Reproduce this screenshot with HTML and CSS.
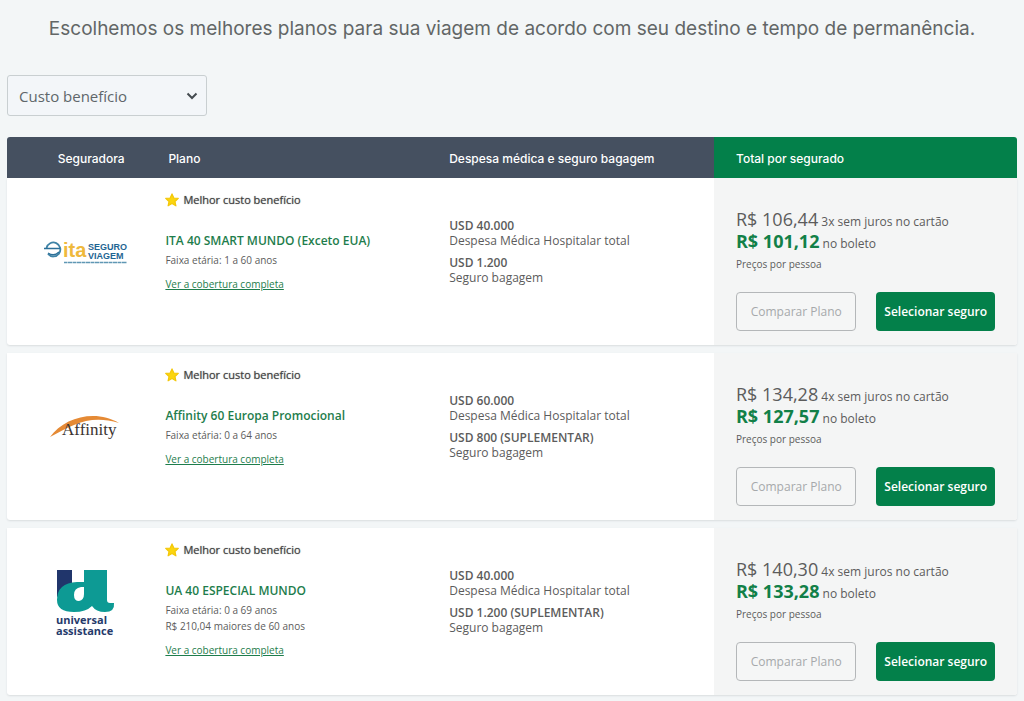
FILE: index.html
```html
<!DOCTYPE html>
<html lang="pt-BR">
<head>
<meta charset="utf-8">
<meta name="viewport" content="width=device-width, initial-scale=1">
<title>Seguro viagem - Planos</title>
<link rel="stylesheet" href="styles.css">
</head>
<body>
	<h1 class="titulo">Escolhemos os melhores planos para sua viagem de acordo com seu destino e tempo de permanência.</h1>

	<div class="filtro">
		<select class="ordem" aria-label="Ordenar por">
			<option>Custo benefício</option>
			<option>Menor preço</option>
			<option>Maior cobertura</option>
		</select>
		<svg class="seta" viewBox="0 0 12 8"><path d="M1.5 1.5 6 6l4.500-4.500"/></svg>
	</div>

	<!-- estrela usada em todos os planos -->
	<svg class="defs">
		<symbol id="estrela" viewBox="0 0 24 24">
			<path fill="#fbd50e" stroke="#f3c70a" stroke-width="2" stroke-linejoin="round" d="M12 1.500l3.200 7 7.600.8-5.700 5.200 1.600 7.500L12 18.200 5.300 22l1.600-7.500L1.200 9.300l7.600-.8z"/>
		</symbol>
	</svg>

	<table class="planos">
		<thead>
			<tr>
				<th class="col-logo">Seguradora</th>
				<th class="col-plano">Plano</th>
				<th class="col-cobertura">Despesa médica e seguro bagagem</th>
				<th class="col-total">Total por segurado</th>
			</tr>
		</thead>
		<tbody>
			<tr>
				<td class="col-logo">
					<svg class="logo-ita" viewBox="0 0 86 26" role="img" aria-label="ITA Seguro Viagem">
						<path d="M3.500 9a7 7 0 1 1 1.500 6" fill="none" stroke="#3f83a6" stroke-width="1.800"/>
						<path d="M1 9.500h16M5 14q6 4 11-1" fill="none" stroke="#2b6f98" stroke-width="1.500"/>
						<text class="ita-nome" x="20" y="18">ita</text>
						<text class="ita-seguro" x="45" y="11">SEGURO</text>
						<text class="ita-seguro" x="45" y="20">VIAGEM</text>
						<path d="M21 23.500h63" stroke="#5f97b4" stroke-width="1.500" stroke-dasharray="3 .5 5 .5"/>
					</svg>
				</td>
				<td class="col-plano">
					<p class="selo"><svg class="estrela"><use href="#estrela"/></svg>Melhor custo benefício</p>
					<h2 class="nome">ITA 40 SMART MUNDO (Exceto EUA)</h2>
					<p class="faixa">Faixa etária: 1 a 60 anos</p>
					<a class="ver" href="#">Ver a cobertura completa</a>
				</td>
				<td class="col-cobertura">
					<p><strong>USD 40.000</strong>Despesa Médica Hospitalar total</p>
					<p><strong>USD 1.200</strong>Seguro bagagem</p>
				</td>
				<td class="col-total">
					<p class="preco"><span class="valor">R$ 106,44</span> 3x sem juros no cartão</p>
					<p class="preco"><strong class="valor">R$ 101,12</strong> no boleto</p>
					<p class="pessoa">Preços por pessoa</p>
					<div class="botoes">
						<button type="button" class="comparar">Comparar Plano</button>
						<button type="button" class="selecionar">Selecionar seguro</button>
					</div>
				</td>
			</tr>
			<tr>
				<td class="col-logo">
					<svg class="logo-affinity" viewBox="0 0 72 28" role="img" aria-label="Affinity">
						<path fill="#e58a35" d="M0 24C14 4 46-4 69 10 52 5 38 6 24 12 14 16 8 20 0 24z"/>
						<text class="affinity-nome" x="12" y="22">Affinity</text>
					</svg>
				</td>
				<td class="col-plano">
					<p class="selo"><svg class="estrela"><use href="#estrela"/></svg>Melhor custo benefício</p>
					<h2 class="nome">Affinity 60 Europa Promocional</h2>
					<p class="faixa">Faixa etária: 0 a 64 anos</p>
					<a class="ver" href="#">Ver a cobertura completa</a>
				</td>
				<td class="col-cobertura">
					<p><strong>USD 60.000</strong>Despesa Médica Hospitalar total</p>
					<p><strong>USD 800 (SUPLEMENTAR)</strong>Seguro bagagem</p>
				</td>
				<td class="col-total">
					<p class="preco"><span class="valor">R$ 134,28</span> 4x sem juros no cartão</p>
					<p class="preco"><strong class="valor">R$ 127,57</strong> no boleto</p>
					<p class="pessoa">Preços por pessoa</p>
					<div class="botoes">
						<button type="button" class="comparar">Comparar Plano</button>
						<button type="button" class="selecionar">Selecionar seguro</button>
					</div>
				</td>
			</tr>
			<tr>
				<td class="col-logo">
					<svg class="logo-ua" viewBox="0 0 62 70" role="img" aria-label="Universal Assistance">
						<path fill="#20356b" d="M2 3h15v17L2 30z"/>
						<path fill="#0d9a94" d="M29 3h23v30q0 3 3 3h4q1 9-9 9-9 0-13-6-6 6-18 6Q2 45 2 33q0-17 20-18h7zM29 20h-3q-7 1-7 8 0 6 5 6 5-1 5-7z"/>
						<text class="ua-nome" x="1" y="57">universal</text>
						<text class="ua-nome" x="1" y="68">assistance</text>
					</svg>
				</td>
				<td class="col-plano">
					<p class="selo"><svg class="estrela"><use href="#estrela"/></svg>Melhor custo benefício</p>
					<h2 class="nome">UA 40 ESPECIAL MUNDO</h2>
					<p class="faixa">Faixa etária: 0 a 69 anos</p>
					<p class="faixa">R$ 210,04 maiores de 60 anos</p>
					<a class="ver" href="#">Ver a cobertura completa</a>
				</td>
				<td class="col-cobertura">
					<p><strong>USD 40.000</strong>Despesa Médica Hospitalar total</p>
					<p><strong>USD 1.200 (SUPLEMENTAR)</strong>Seguro bagagem</p>
				</td>
				<td class="col-total">
					<p class="preco"><span class="valor">R$ 140,30</span> 4x sem juros no cartão</p>
					<p class="preco"><strong class="valor">R$ 133,28</strong> no boleto</p>
					<p class="pessoa">Preços por pessoa</p>
					<div class="botoes">
						<button type="button" class="comparar">Comparar Plano</button>
						<button type="button" class="selecionar">Selecionar seguro</button>
					</div>
				</td>
			</tr>
		</tbody>
	</table>
</body>
</html>
```
FILE: styles.css
```css
* { box-sizing: border-box; }
body { margin: 0; padding: 14px 7px 0; background: #f3f6f7; color: #5c5c5c; font-family: "Open Sans", "Noto Sans", sans-serif; font-size: 12px; }
h1, h2, p { margin: 0; }
.defs { display: none; }

.titulo { color: #626666; font: 400 19px/30px Inter, sans-serif; text-align: center; }

/* filtro */
.filtro { display: grid; width: 200px; margin: 31px 0 21px; align-items: center; }
.ordem { grid-area: 1 / 1; height: 41px; padding: 0 11px; appearance: none; background: #f3f6f9; border: 1px solid #c9cfd1; border-radius: 3px; color: #60666a; font: 15px "Open Sans", sans-serif; }
.seta { grid-area: 1 / 1; justify-self: end; width: 12px; height: 8px; margin-right: 9px; fill: none; stroke: #444b50; stroke-width: 2; pointer-events: none; }

/* tabela */
.planos, .planos thead, .planos tbody { display: block; }
.planos tr { display: grid; grid-template-columns: 14% 28% 28% 30%; overflow: hidden; }
.planos th { height: 41px; background: #455060; color: #fff; font: 500 12px/41px Inter, sans-serif; text-align: left; }
.planos thead tr { border-radius: 3px 3px 0 0; }
.planos tbody tr { min-height: 167px; margin-bottom: 8px; background: #fff; border-radius: 0 0 3px 3px; box-shadow: 0 1px 2px #d9dddf; }
.planos th.col-logo { padding-left: 28px; text-align: center; }
.planos th.col-plano { padding-left: 20px; }
.planos th.col-cobertura { padding-left: 18px; }
.planos th.col-total { padding-left: 22px; background: #03804a; }

td.col-logo { display: flex; align-items: center; justify-content: center; padding: 0 0 20px 16px; }
td.col-plano { padding: 14px 0 0 17px; }
td.col-cobertura { padding: 40px 0 0 18px; }
td.col-total { padding: 32px 22px 0; background: #f4f5f5; }

/* plano */
.selo { display: flex; align-items: center; gap: 4px; margin-bottom: 23px; color: #444; font-size: 11px; line-height: 16px; text-shadow: 0 0 1px #777; }
.estrela { width: 14px; height: 14px; }
.nome { margin-bottom: 1px; color: #1e7d4c; font-size: 12px; font-weight: 600; line-height: 20px; }
.faixa { font-size: 10px; line-height: 16px; }
.ver { display: inline-block; margin-top: 8px; color: #1e7d4c; font-size: 10px; line-height: 16px; }

/* coberturas */
td.col-cobertura p { margin-bottom: 7px; line-height: 15px; }
td.col-cobertura strong { display: block; font-weight: 600; }

/* total */
.preco { font-size: 12px; line-height: 21px; }
.valor { font-size: 18px; line-height: 18px; }
strong.valor { color: #128048; font-weight: 700; }
.pessoa { margin-top: 2px; font-size: 10px; line-height: 16px; }
.botoes { display: flex; gap: 20px; margin-top: 20px; }
.botoes button { flex: 1; height: 39px; padding: 0; border-radius: 4px; font: 12px "Open Sans", sans-serif; white-space: nowrap; }
.comparar { background: #f5f6f6; border: 1px solid #b4b7b9; color: #a6a9ab; }
.botoes .selecionar { background: #03804a; border: 0; color: #fff; font-weight: 600; }

/* logos */
.logo-ita { width: 86px; height: 26px; }
.ita-nome { fill: #efb93c; font: 700 20px "Liberation Sans", sans-serif; }
.ita-seguro { fill: #1f6593; font: 700 9px "Liberation Sans", sans-serif; }
.logo-affinity { width: 72px; height: 28px; }
.affinity-nome { fill: #3b3330; font: 17px "Liberation Serif", serif; }
.logo-ua { width: 62px; height: 70px; }
.ua-nome { fill: #263a6b; font: 700 11px "Open Sans", sans-serif; }
```
